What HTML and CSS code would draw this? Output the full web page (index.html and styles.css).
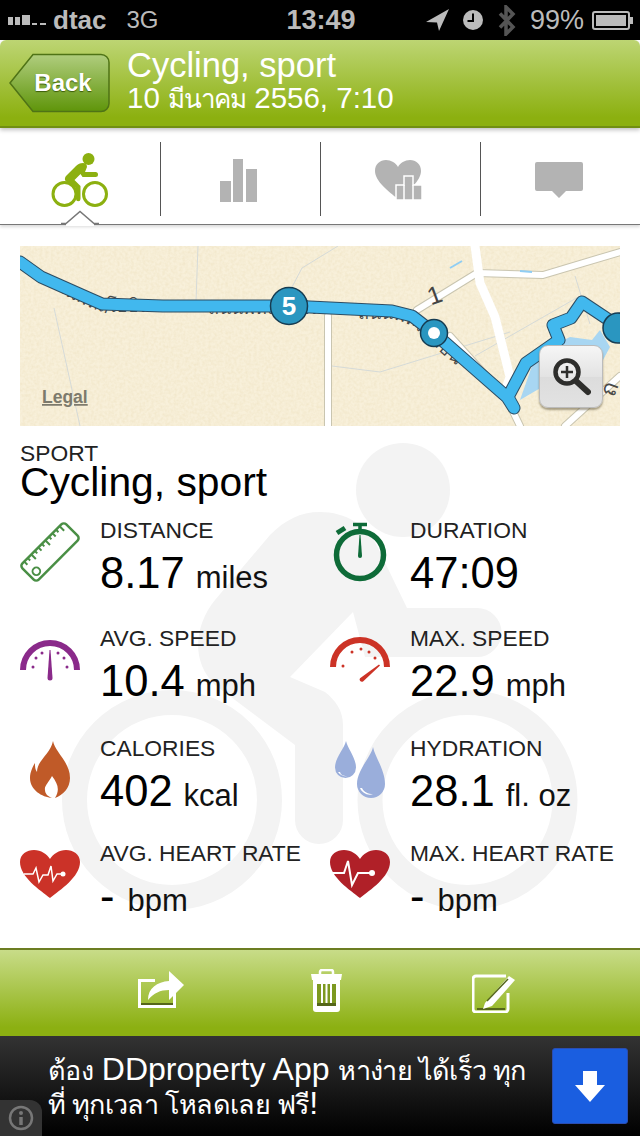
FILE: index.html
```html
<!DOCTYPE html>
<html lang="en">
<head>
<meta charset="utf-8">
<title>Cycling, sport</title>
<link rel="stylesheet" href="styles.css">
</head>
<body>
<div class="screen">
  <div class="status">
    <div class="status-left">
      <svg class="signal" width="38" height="10" viewBox="0 0 38 10"><path d="M0 2h5v8H0zM7 2h5v8H7zM14 0h8v10h-8zM24 8h5v2h-5zM32 8h6v2h-6z" fill="#bbb"/></svg>
      <span class="carrier">dtac</span>
      <span class="net">3G</span>
    </div>
    <div class="clock">13:49</div>
    <div class="status-right">
      <svg width="24" height="24" viewBox="0 0 24 24"><path d="M23 1 0 14l11 .5L13 23z" fill="#bbb"/></svg>
      <svg class="st-clock" width="20" height="20" viewBox="0 0 20 20"><circle cx="10" cy="10" r="10" fill="#bbb"/><path d="M10 3.500v7.500H4.500" fill="none" stroke="#000" stroke-width="2"/></svg>
      <svg class="st-bt" width="18" height="31" viewBox="0 0 18 31"><path d="M2 8.500 15 22 8 29V2l7 7L2 22.500" fill="none" stroke="#555" stroke-width="3.500"/></svg>
      <span class="pct">99%</span>
      <svg class="st-batt" width="42" height="19" viewBox="0 0 42 19"><rect x="1" y="1" width="36" height="17" rx="2" fill="none" stroke="#bbb" stroke-width="2"/><rect x="4" y="4" width="30" height="11" fill="#bbb"/><path d="M38 6h3v7h-3z" fill="#bbb"/></svg>
    </div>
  </div>

  <header class="topbar">
    <a class="back">
      <svg class="back-shape" width="102" height="60" viewBox="0 0 102 60">
        <defs><linearGradient id="bk" x1="0" y1="0" x2="0" y2="1"><stop offset="0" stop-color="#b0cd7e"/><stop offset="1" stop-color="#5f950a"/></linearGradient></defs>
        <path d="M1 30 24 1.500H92a8 8 0 0 1 8 8v41a8 8 0 0 1-8 8H24z" fill="url(#bk)" stroke="#4f7316" stroke-width="1.500"/>
      </svg>
      <span class="back-label">Back</span>
    </a>
    <div class="titles">
      <div class="title">Cycling, sport</div>
      <div class="subtitle">10 <span class="thai-sub">มีนาคม</span> 2556, 7:10</div>
    </div>
  </header>

  <nav class="tabs">
    <div class="tab">
      <svg width="60" height="56" viewBox="0 0 60 56">
        <circle cx="38.500" cy="7" r="6" fill="#8cb010"/>
        <circle cx="14.500" cy="42" r="11.500" fill="none" stroke="#8cb010" stroke-width="3"/>
        <circle cx="45" cy="42" r="11.500" fill="none" stroke="#8cb010" stroke-width="3"/>
        <path d="M33 11c-3 0-5 1-7 3L16 24c-2 3-1 5 1 6l9 6v11a2.200 2.200 0 0 0 4.500 0V34l-6-6 6-6 2 3h13a2.500 2.500 0 0 0 0-5H35l2-5c0-3-2-4-4-4z" fill="#8cb010"/>
      </svg>
    </div>
    <div class="tab">
      <svg width="40" height="44" viewBox="0 0 40 44"><path d="M1 23h11v21H1zM14 1h10v43H14zM27 11h11v33H27z" fill="#b3b3b3"/></svg>
    </div>
    <div class="tab">
      <svg width="50" height="42" viewBox="0 0 50 42">
        <path d="M24 40C14 32 1 22 1 12 1 5 6 1 12 1c5 0 10 3 12 7 2-4 7-7 12-7 6 0 11 4 11 11 0 10-13 20-23 28z" fill="#b3b3b3"/>
        <path d="M22 26h8v-9h9v9h9v15H22z" fill="#b3b3b3" stroke="#fff" stroke-width="1.500"/>
        <path d="M30 26v15M39 26v15" stroke="#fff" stroke-width="1.500"/>
      </svg>
    </div>
    <div class="tab">
      <svg width="50" height="38" viewBox="0 0 50 38"><path d="M3 1h44a2 2 0 0 1 2 2v25a2 2 0 0 1-2 2H32l-7 7-7-7H3a2 2 0 0 1-2-2V3a2 2 0 0 1 2-2z" fill="#b3b3b3"/></svg>
    </div>
    <svg class="tab-pointer" width="38" height="16" viewBox="0 0 38 16"><path d="M5 16V13L19 1 33 13V16z" fill="#fff"/><path d="M0 13.500H5L19 1.500 33 13.500H38" fill="none" stroke="#777" stroke-width="1.500"/></svg>
  </nav>

  <main class="detail">
    <svg class="watermark" width="640" height="723" viewBox="0 225 640 723">
      <circle cx="403" cy="490" r="47" fill="#f3f3f3"/>
      <circle cx="172" cy="800" r="97.500" fill="none" stroke="#f3f3f3" stroke-width="25"/>
      <circle cx="467.500" cy="800" r="97.500" fill="none" stroke="#f3f3f3" stroke-width="25"/>
      <path d="M320 512C300 512 285 520 270 535L215 600C195 625 190 660 215 685L295 745V820A24 24 0 0 0 343 820V725C343 710 335 700 325 692L290 677 353 612 365 657H477A24.500 24.500 0 0 0 477 608H407L378 548C368 525 345 512 320 512Z" fill="#f3f3f3"/>
    </svg>

    <div class="map">
      <svg width="600" height="180" viewBox="0 0 600 180">
        <defs>
          <filter id="paper" x="0" y="0" width="100%" height="100%">
            <feTurbulence type="fractalNoise" baseFrequency=".35" numOctaves="2" seed="4"/>
            <feColorMatrix values="0 0 0 0 .75  0 0 0 0 .62  0 0 0 0 .35  0 0 0 .45 -.14"/>
          </filter>
          <path id="r1" d="M24 38 66 60 82 66H186"/>
          <path id="r2" d="M188 68H330"/>
          <path id="r3" d="M338 73 372 73 392 79 410 96 480 160"/>
        </defs>
        <rect width="600" height="180" fill="#f8f0da"/>
        <rect width="600" height="180" filter="url(#paper)"/>
        <g fill="none" stroke="#d5dad8" stroke-width="1">
          <path d="M178 0 176 55M34 62l26 118M318 0 282 22 262 60M312 120l48 6 130-40"/>
          <path d="M455 110 560 50M555 30 570 78"/>
        </g>
        <g fill="none" stroke-linecap="round" stroke-linejoin="round">
          <path d="M397 64 457 27 523 29 600 6M308 180V70M545 180 600 130M430 90 487 153 500 180M455 0 460 37 475 71 490 131 483 151" stroke="#c9c5b0" stroke-width="8"/>
          <path d="M397 64 457 27 523 29 600 6M308 180V70M545 180 600 130M430 90 487 153 500 180" stroke="#fff" stroke-width="6"/>
          <path d="M455 0 460 37 475 71 490 131 483 151" stroke="#fff" stroke-width="9"/>
        </g>
        <path d="M430 22 442 15M512 26 500 25" stroke="#8fcdf3" stroke-width="2"/>
        <path d="M500 154 513 117 530 101 550 91 572 94 580 84 590 101 583 114 517 144Z" fill="#a8d6f2"/>
        <text class="map-road"><textPath href="#r1">ถนนพหลโยธิน</textPath></text>
        <text class="map-road"><textPath href="#r2">ถนนพหลโยธิน</textPath></text>
        <text class="map-road"><textPath href="#r3">ถนนพหลโยธิน</textPath></text>
        <text class="map-num" x="408" y="58" transform="rotate(-20 414 50)">1</text>
        <path d="M0 16 21 31 66 51 82 58 143 60 269 60 372 65 392 70 414 87 487 151 494 162 488 151 506 117 539 94 533 79 551 72 562 56 598 80" fill="none" stroke="#2c4c63" stroke-width="13" stroke-linejoin="round" stroke-linecap="round"/>
        <path d="M0 16 21 31 66 51 82 58 143 60 269 60 372 65 392 70 414 87 487 151 494 162 488 151 506 117 539 94 533 79 551 72 562 56 598 80" fill="none" stroke="#41b8ee" stroke-width="11" stroke-linejoin="round" stroke-linecap="round"/>
        <circle cx="269" cy="60" r="18.500" fill="#2a96c0" stroke="#163c52" stroke-width="1.500"/>
        <text class="map-five" x="269" y="69" text-anchor="middle">5</text>
        <circle cx="414" cy="87" r="13.500" fill="#2a96c0" stroke="#163c52" stroke-width="1.500"/>
        <circle cx="414" cy="87" r="6" fill="#fff"/>
        <circle cx="598" cy="82" r="15" fill="#2a96c0" stroke="#163c52" stroke-width="1.500"/>
        <text class="map-legal" x="22" y="157">Legal</text>
        <text class="map-corner" x="584" y="150" transform="rotate(-70 590 144)">ถ</text>
      </svg>
      <button class="zoom-btn">
        <svg width="40" height="40" viewBox="0 0 40 40">
          <circle cx="16" cy="15" r="11.500" fill="#fff" fill-opacity=".2" stroke="#2e2e2c" stroke-width="4.500"/>
          <path d="M16 9v12M10 15h12" stroke="#2e2e2c" stroke-width="2.500"/>
          <path d="M25 24 37 35" stroke="#2e2e2c" stroke-width="6" stroke-linecap="round"/>
        </svg>
      </button>
    </div>

    <section class="sport">
      <div class="label">SPORT</div>
      <div class="sport-name">Cycling, sport</div>
    </section>

    <section class="stats">
      <div class="stat">
        <svg class="stat-icon" width="60" height="60" viewBox="0 0 60 60">
          <g transform="rotate(-45 30 30)">
            <rect x="-1" y="18.500" width="62" height="23" rx="3.500" fill="none" stroke="#4a8f45" stroke-width="2.500"/>
            <path d="M5 19v4M10 19v3M15 19v6M20 19v3M25 19v4M30 19v3M35 19v6M40 19v3M45 19v4M50 19v3M55 19v6" stroke="#4a8f45" stroke-width="2"/>
            <circle cx="6.700" cy="34" r="3.800" fill="none" stroke="#4a8f45" stroke-width="2"/>
          </g>
        </svg>
        <div class="stat-text"><div class="label">DISTANCE</div><div class="value">8.17<span class="unit">miles</span></div></div>
      </div>
      <div class="stat">
        <svg class="stat-icon" width="60" height="60" viewBox="0 0 60 60">
          <circle cx="30" cy="33" r="23.500" fill="none" stroke="#0e6b38" stroke-width="5.500"/>
          <path d="M23 2.500h14M30 2.500v8" stroke="#0e6b38" stroke-width="3.500"/>
          <path d="M7 11 15 6" stroke="#0e6b38" stroke-width="5"/>
          <path d="M29.500 13h1L32 34a2 2 0 0 1-4 0z" fill="#0e6b38"/>
        </svg>
        <div class="stat-text"><div class="label">DURATION</div><div class="value">47:09</div></div>
      </div>
      <div class="stat">
        <svg class="stat-icon" width="60" height="60" viewBox="0 0 60 60">
          <path d="M3 40a27 27 0 0 1 54 0" fill="none" stroke="#8a2a8a" stroke-width="6"/>
          <path d="M29.500 20h1L32.500 48a2.500 2.500 0 0 1-5 0z" fill="#8a2a8a"/>
          <g fill="#8a2a8a"><circle cx="13" cy="37" r="1.500"/><circle cx="22" cy="23" r="1.500"/><circle cx="38" cy="23" r="1.500"/><circle cx="44" cy="28" r="1.500"/><circle cx="47" cy="37" r="1.500"/><circle cx="16" cy="28" r="1.500"/></g>
        </svg>
        <div class="stat-text"><div class="label">AVG. SPEED</div><div class="value">10.4<span class="unit">mph</span></div></div>
      </div>
      <div class="stat">
        <svg class="stat-icon" width="60" height="60" viewBox="0 0 60 60">
          <path d="M3 37a27 27 0 0 1 54 0" fill="none" stroke="#cc3326" stroke-width="6"/>
          <path d="M49 34.500 50 35.500 33 51.500a2.300 2.300 0 0 1-3-3.300z" fill="#cc3326"/>
          <g fill="#cc3326"><circle cx="13" cy="36" r="1.500"/><circle cx="22" cy="22" r="1.500"/><circle cx="31" cy="19" r="1.500"/><circle cx="39" cy="22" r="1.500"/><circle cx="45" cy="28" r="1.500"/></g>
        </svg>
        <div class="stat-text"><div class="label">MAX. SPEED</div><div class="value">22.9<span class="unit">mph</span></div></div>
      </div>
      <div class="stat">
        <svg class="stat-icon" width="60" height="60" viewBox="0 0 60 60">
          <path d="M33 1C35 12 50 22 50 38 50 48 43 55 35 58 40 50 38 44 32 36 29 42 24 46 25 50 25 53 27 56 32 58 22 57 10 50 10 38 10 32 13 26 15 23 15 27 15 29 17 32 17 20 30 15 33 1Z" fill="#c05a28"/>
        </svg>
        <div class="stat-text"><div class="label">CALORIES</div><div class="value">402<span class="unit">kcal</span></div></div>
      </div>
      <div class="stat">
        <svg class="stat-icon" width="60" height="60" viewBox="0 0 60 60">
          <path d="M16 1C18 9 26 18 26 27.500A10.500 10.500 0 0 1 5 27.500C5 18 14 9 16 1Z" fill="#9aaedb"/>
          <path d="M43 7C45 17 55 30 55 44A14 14 0 0 1 27 44C27 30 41 17 43 7Z" fill="#9aaedb"/>
          <path d="M8 32c2 3 6 5 9 4-4 0-6-1-7-4zM30 48c2 5 8 8 13 6-5 0-9-2-11-6z" fill="#fff"/>
        </svg>
        <div class="stat-text"><div class="label">HYDRATION</div><div class="value">28.1<span class="unit">fl. oz</span></div></div>
      </div>
      <div class="stat stat-heart">
        <svg class="stat-icon" width="60" height="60" viewBox="0 0 60 60">
          <path d="M30 53C20 45 0 32 0 17 0 9 7 5 14 5 21 5 27 9 30 14 33 9 39 5 46 5 53 5 60 9 60 17 60 32 40 45 30 53Z" fill="#cb3228"/>
          <path d="M4 29H13L16 23 19 37 23 30H28L31 21 33 36 37 29H43" fill="none" stroke="#fff" stroke-width="1.500"/>
          <circle cx="43" cy="29" r="2.500" fill="#fff"/>
        </svg>
        <div class="stat-text"><div class="label">AVG. HEART RATE</div><div class="value">-<span class="unit">bpm</span></div></div>
      </div>
      <div class="stat stat-heart">
        <svg class="stat-icon" width="60" height="60" viewBox="0 0 60 60">
          <path d="M30 53C20 45 0 32 0 17 0 9 7 5 14 5 21 5 27 9 30 14 33 9 39 5 46 5 53 5 60 9 60 17 60 32 40 45 30 53Z" fill="#b02028"/>
          <path d="M2 28H14L18 16 22 40 28 28H42" fill="none" stroke="#fff" stroke-width="2"/>
          <circle cx="42" cy="28" r="3" fill="#fff"/>
        </svg>
        <div class="stat-text"><div class="label">MAX. HEART RATE</div><div class="value">-<span class="unit">bpm</span></div></div>
      </div>
    </section>
  </main>

  <footer class="toolbar">
    <svg class="tool-share" width="48" height="42" viewBox="0 0 48 42">
      <path d="M1 10h17v3H4v23h32V24h3v15H1z" fill="#fff"/>
      <path d="M4 34h32v2H4z" fill="#55661a"/>
      <path d="M11 31c0-12 9-18 21-19V2l15 14-15 15V21c-9 0-15 3-21 10z" fill="#fff"/>
    </svg>
    <svg class="tool-trash" width="33" height="44" viewBox="0 0 33 44">
      <path d="M10 5V3a2 2 0 0 1 2-2h9a2 2 0 0 1 2 2v2" fill="none" stroke="#fff" stroke-width="2.500"/>
      <path d="M1 5h31l-1 6H2z" fill="#fff"/>
      <path d="M3 11h27v29a3 3 0 0 1-3 3H6a3 3 0 0 1-3-3z" fill="#fff"/>
      <path d="M7 15h19v22H7z" fill="#7d9920"/>
      <path d="M7 34h19v3H7z" fill="#55661a"/>
      <path d="M12 15v19M16.500 15v19M21 15v19" stroke="#fff" stroke-width="2"/>
    </svg>
    <svg class="tool-edit" width="44" height="40" viewBox="0 0 44 40">
      <path d="M34 3H4a3 3 0 0 0-3 3v30a3 3 0 0 0 3 3h29a3 3 0 0 0 3-3V20" fill="none" stroke="#fff" stroke-width="3"/>
      <path d="M5 35h28v2H5z" fill="#55661a"/>
      <path d="M13 30 37 3l6 4-23 26-9 3z" fill="#fff"/>
      <path d="M15 28 36 6" stroke="#55661a" stroke-width="1.500"/>
    </svg>
  </footer>

  <aside class="ad">
    <div class="ad-text"><span class="thai">ต้อง</span> DDproperty App <span class="thai">หาง่าย ได้เร็ว ทุก ที่ ทุกเวลา โหลดเลย ฟรี</span>!</div>
    <div class="ad-btn">
      <svg width="32" height="32" viewBox="0 0 32 32"><path d="M9 1h14v14h8L16 32 1 15h8z" fill="#fff"/></svg>
    </div>
    <div class="ad-info">
      <svg width="26" height="26" viewBox="0 0 26 26"><circle cx="13" cy="13" r="11" fill="none" stroke="#777" stroke-width="2.500"/><circle cx="13" cy="8" r="2" fill="#777"/><path d="M13 12v8" stroke="#777" stroke-width="3.500"/></svg>
    </div>
  </aside>
</div>
</body>
</html>
```

FILE: styles.css
```css
* { box-sizing: border-box; }
html, body { margin: 0; padding: 0; background: #000; }
body { font-family: "Liberation Sans", "Noto Sans", "DejaVu Sans", sans-serif; }
.screen { width: 640px; height: 1136px; display: flex; flex-direction: column; overflow: hidden; background: #fff; position: relative; }

.status { height: 40px; flex: none; background: #000; color: #bbb; display: flex; align-items: center; justify-content: space-between; padding: 0 6px 0 8px; }
.status-left, .status-right { flex: 1; display: flex; align-items: center; }
.status-right { justify-content: flex-end; }
.carrier { font-size: 26px; font-weight: bold; margin-left: 7px; }
.net { font-size: 24px; margin-left: 20px; }
.clock { font-size: 27px; font-weight: bold; }
.st-clock { margin-left: 13px; }
.st-bt { margin-left: 15px; }
.pct { font-size: 27px; margin-left: 14px; }
.st-batt { margin-left: 8px; }

.topbar { height: 88px; flex: none; display: flex; align-items: center; padding-left: 9px; border-radius: 6px 6px 0 0; background: linear-gradient(#bdd573, #8cb010 90%); border-bottom: 2px solid #718f12; box-shadow: 0 2px 4px rgba(0,0,0,.25); position: relative; z-index: 2; color: #fff; }
.back { position: relative; width: 102px; height: 60px; display: flex; align-items: center; justify-content: center; margin-right: 16px; }
.back-shape { position: absolute; left: 0; top: 0; }
.back-label { position: relative; font-size: 24px; font-weight: bold; color: #fff; text-shadow: 0 1px 1px #3c5c08; margin-left: 6px; }
.titles { margin-top: -5px; }
.title { font-size: 34.500px; line-height: 36px; }
.subtitle { font-size: 29.500px; line-height: 30px; }
.thai-sub { font-size: 26px; letter-spacing: -1.200px; }

.tabs { height: 97px; flex: none; display: grid; grid-template-columns: repeat(4, 160px); align-items: start; padding-top: 14px; border-bottom: 1.500px solid #777; box-shadow: 0 2px 3px rgba(0,0,0,.15); position: relative; background: #fff; z-index: 1; }
.tab { height: 74px; display: flex; align-items: center; justify-content: center; padding: 2px 3px 0 0; border-left: 1px solid #555; }
.tab:first-child { border-left: 0; padding-right: 0; }
.tab-pointer { position: absolute; left: 61px; bottom: -2px; }

.detail { flex: 1; position: relative; padding: 21px 20px 0; min-height: 0; }
.watermark { position: absolute; left: 0; top: 0; }
.map { position: relative; width: 600px; height: 180px; overflow: hidden; }
.map > svg { display: block; }
.map-road { font-size: 18px; fill: #4a4a48; font-family: "Noto Sans", "DejaVu Sans", sans-serif; }
.map-corner { font-size: 23px; fill: #4a4a48; font-family: "Noto Sans", "DejaVu Sans", sans-serif; }
.map-num { font-size: 25px; fill: #444; }
.map-five { font-size: 26px; font-weight: bold; fill: #fff; }
.map-legal { font-size: 17.500px; font-weight: bold; fill: #7d7a6c; text-decoration: underline; }
.zoom-btn { position: absolute; left: 519px; top: 99px; width: 64px; height: 63px; padding: 0; border: 1.500px solid #bbb; border-radius: 9px; background: linear-gradient(#f6f6f6, #e3e3e3 50%, #dcdcdc 50%, #e2e2e2); box-shadow: 0 2px 2px rgba(90,80,50,.5); display: flex; align-items: center; justify-content: center; }

.sport { position: relative; padding-top: 15px; color: #000; }
.label { font-size: 22.800px; line-height: 28px; color: #222; white-space: nowrap; }
.sport .label { line-height: 24px; }
.sport-name { font-size: 40.800px; line-height: 38px; margin-top: -2px; }

.stats { position: relative; margin-top: 15px; display: grid; grid-template-columns: 310px 290px; grid-template-rows: 108px 110px 105px 90px; }
.stat { display: flex; align-items: flex-start; }
.stat-icon { flex: none; margin: 6px 20px 0 0; }
.value { font-size: 43.500px; line-height: 48px; margin-top: 5px; color: #000; white-space: nowrap; }
.unit { font-size: 31px; margin-left: 11px; color: #111; }
.stat-heart .unit { margin-left: 13px; }

.toolbar { height: 88px; flex: none; display: flex; align-items: center; gap: 125px; padding: 0 0 6px 137px; background: linear-gradient(#c8dc88, #8cb012 90%); border-top: 2px solid #6c7d22; }
.tool-trash { margin-top: 2px; }
.tool-edit { margin: 6px 0 0 4px; }

.ad { height: 100px; flex: none; position: relative; display: flex; background: linear-gradient(#333, #000); color: #fff; }
.ad-text { width: 484px; margin: 17px 0 0 48px; font-size: 32px; line-height: 32px; }
.thai { font-size: 27px; letter-spacing: -.700px; }
.ad-btn { position: absolute; right: 12px; top: 12px; width: 76px; height: 76px; border: 1.500px solid #2b4db0; border-radius: 3px; background: #1a5ee0; display: flex; align-items: center; justify-content: center; }
.ad-info { position: absolute; left: 0; bottom: 0; width: 42px; height: 36px; border-radius: 0 12px 0 0; background: #333; display: flex; align-items: center; justify-content: center; }
```
